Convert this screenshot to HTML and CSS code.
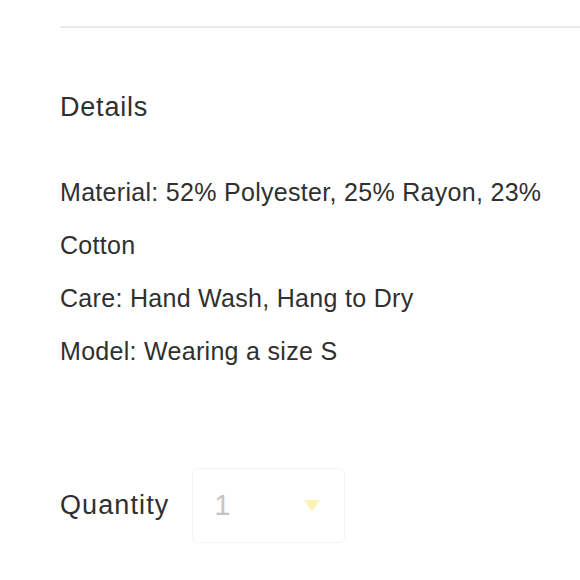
FILE: index.html
```html
<!DOCTYPE html>
<html>
<head>
<meta charset="utf-8">
<link rel="stylesheet" href="styles.css">
</head>
<body>
<div class="page">
  <div class="rule"></div>
  <h2 class="title">Details</h2>
  <p class="details">Material: 52% Polyester, 25% Rayon, 23% Cotton<br>Care: Hand Wash, Hang to Dry<br>Model: Wearing a size S</p>
  <div class="qty-row">
    <span class="qty-label">Quantity</span>
    <div class="select">
      <span class="select-value">1</span>
      <span class="caret"></span>
    </div>
  </div>
</div>
</body>
</html>
```
FILE: styles.css
```css
html, body {
  margin: 0;
  padding: 0;
  background: #ffffff;
}
.page {
  padding: 26px 30px 0 60px;
  font-family: "Liberation Sans", Arial, sans-serif;
  color: #303030;
}
.rule {
  height: 2px;
  background: #ececec;
  margin-right: -30px;
}
.title {
  margin: 64px 0 0;
  font-size: 27px;
  letter-spacing: 0.8px;
  font-weight: normal;
  line-height: 31px;
}
.details {
  margin: 43px 0 0;
  font-size: 25px;
  letter-spacing: 0.3px;
  line-height: 53px;
}
.qty-row {
  margin-top: 90px;
  display: flex;
  align-items: center;
  gap: 23px;
}
.qty-label {
  font-size: 27px;
  letter-spacing: 1.1px;
}
.select {
  width: 153px;
  height: 75px;
  box-sizing: border-box;
  border: 1px solid #f3f3f3;
  border-radius: 6px;
  display: flex;
  align-items: center;
  justify-content: space-between;
  padding: 0 24px 0 21px;
}
.select-value {
  font-size: 29px;
  color: #c4c4c4;
}
.caret {
  width: 0;
  height: 0;
  border-left: 8px solid transparent;
  border-right: 8px solid transparent;
  border-top: 12px solid #fff3b8;
}
```
